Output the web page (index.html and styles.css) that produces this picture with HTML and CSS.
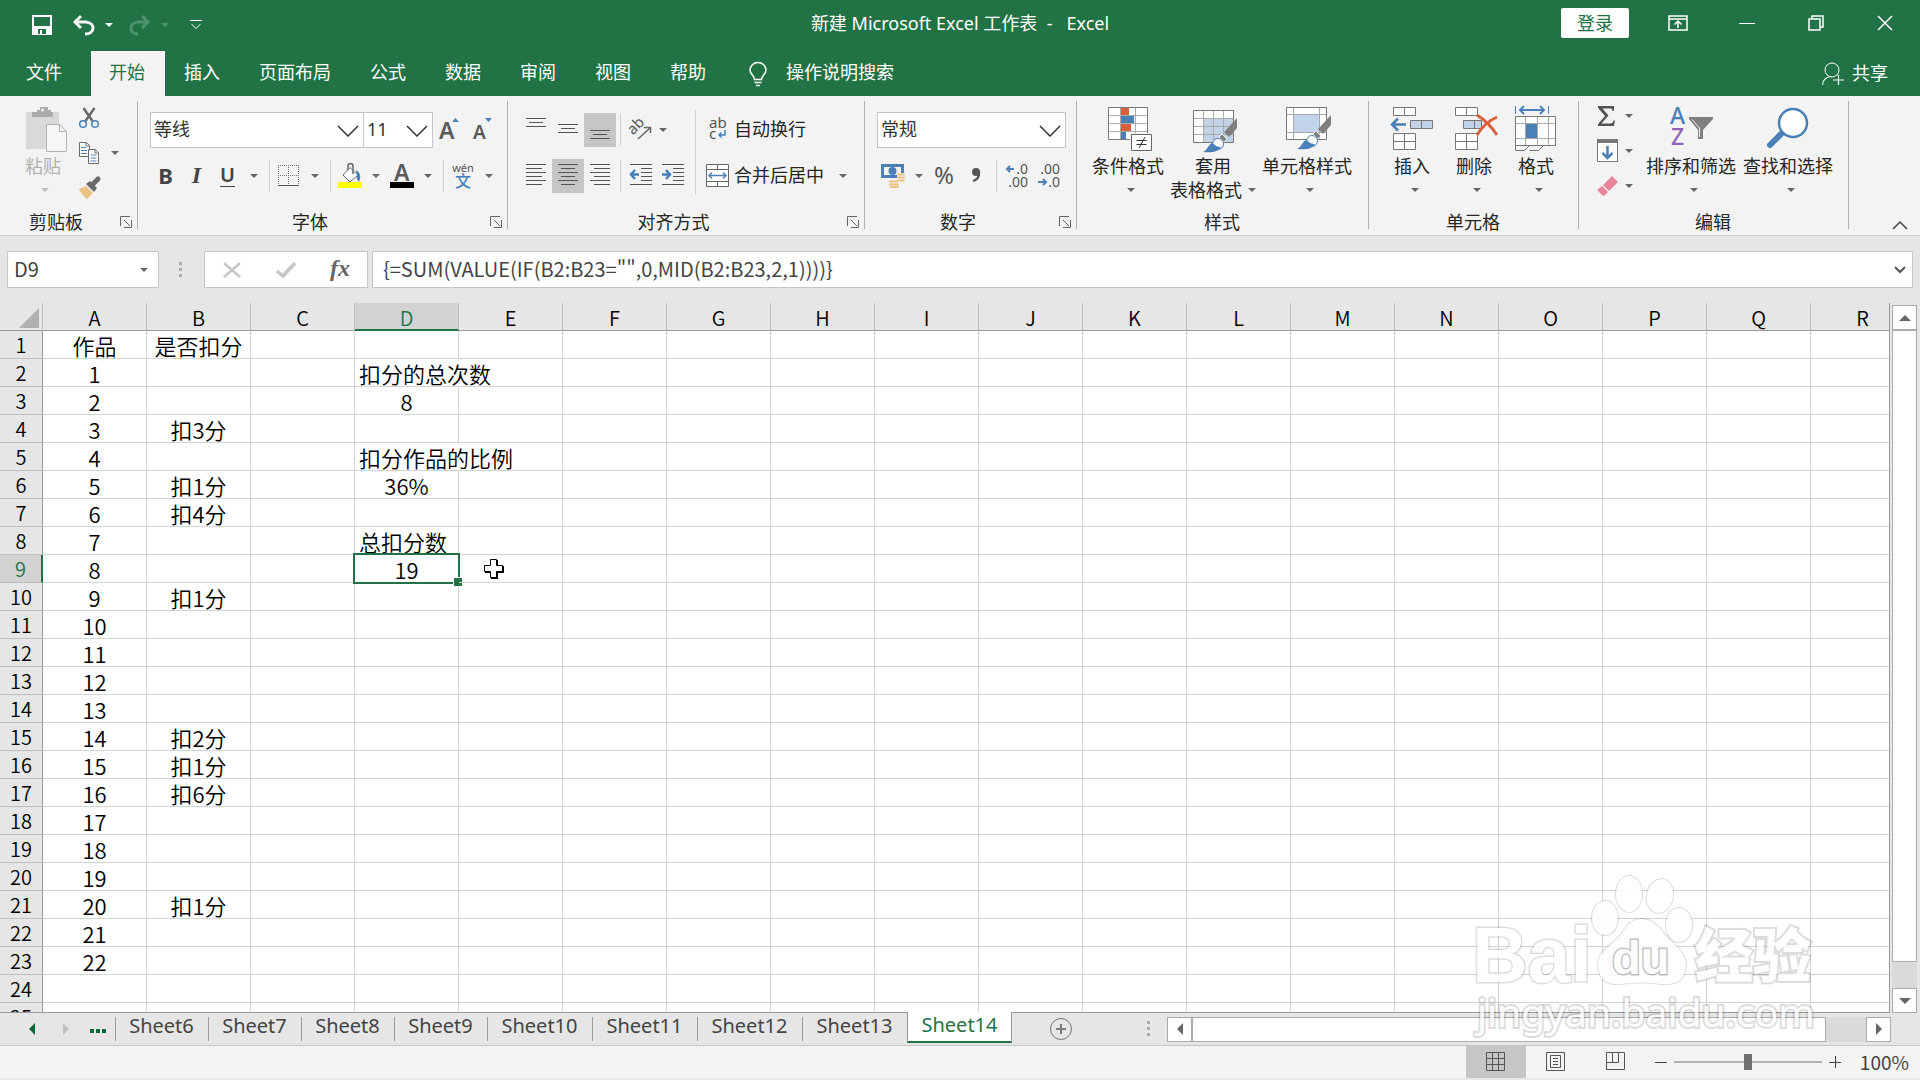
FILE: index.html
```html
<!DOCTYPE html>
<html lang="zh-CN">
<head>
<meta charset="utf-8">
<title>新建 Microsoft Excel 工作表 - Excel</title>
<link rel="stylesheet" href="styles.css">
</head>
<body>
<svg class="defs" aria-hidden="true">
  <symbol id="caret" viewBox="0 0 8 4"><path d="M0 0h8L4 4z" fill="currentColor"/></symbol>
  <symbol id="chevron" viewBox="0 0 22 12"><path d="M1 1l10 10L21 1" fill="none" stroke="#333" stroke-width="1.5"/></symbol>
  <symbol id="launcher" viewBox="0 0 12 12"><path d="M.5 10V.5H10M4 4l6 6M11.500 4v7.500H4" fill="none" stroke="#666"/></symbol>
  <symbol id="brush" viewBox="0 0 48 48">
    <path d="M48 12v10l-8 9-5-5z" fill="#7f7f7f"/>
    <path d="M33 28l5 5-3 3-5-5z" fill="#7f7f7f" stroke="#f3f3f3"/>
    <circle cx="29" cy="38" r="5.500" fill="#fff" stroke="#4a80b8"/>
    <path d="M14 46c5-2 5-8 10-9 2 3 5 4 8 4-3 5-10 6-18 5z" fill="#4a80b8"/>
  </symbol>
</svg>
<div class="app">
  <header class="titlebar">
    <div class="quick">
      <button class="quick-save" aria-label="保存"><svg width="20" height="20"><path d="M1 1h18v18H1z" fill="none" stroke="#fff" stroke-width="2"/><path d="M2 11h16v8H2z" fill="#fff"/><path d="M6 14h8v5H6z" fill="#217346"/><path d="M8 15h2v4H8z" fill="#fff"/></svg></button>
      <button class="quick-undo" aria-label="撤消"><svg width="24" height="20"><path d="M9 1L3 7l6 6M3 7h11c10 1 9 12-1 12" fill="none" stroke="#f3f3f3" stroke-width="3"/></svg></button>
      <button class="quick-drop" aria-label="撤消列表"><svg width="8" height="4"><use href="#caret"/></svg></button>
      <button class="quick-redo" aria-label="恢复"><svg width="24" height="20"><path d="M14 1l6 6-6 6M20 7H10C0 8 1 19 10 19" fill="none" stroke="#4f9270" stroke-width="3"/></svg></button>
      <button class="quick-drop faded" aria-label="恢复列表"><svg width="8" height="4"><use href="#caret"/></svg></button>
      <button class="quick-more" aria-label="自定义快速访问工具栏"><svg width="12" height="10"><path d="M0 .5h12M1.500 4L6 8.500 10.500 4" fill="none" stroke="#fff"/></svg></button>
    </div>
    <h1>新建 Microsoft Excel 工作表&nbsp; -&nbsp;&nbsp; Excel</h1>
    <div class="window">
      <button class="signin">登录</button>
      <button class="win" aria-label="功能区显示选项"><svg width="20" height="16"><path d="M1 1h18v14H1zM1 4h18M10 13V7M6.500 9.500L10 6l3.500 3.500" fill="none" stroke="#fff" stroke-width="1.500"/></svg></button>
      <button class="win" aria-label="最小化"><svg width="16" height="16"><path d="M0 8.500h16" stroke="#fff"/></svg></button>
      <button class="win" aria-label="向下还原"><svg width="16" height="16"><path d="M1 4h11v11H1zM4 4V1h11v11h-3" fill="none" stroke="#fff" stroke-width="1.500"/></svg></button>
      <button class="win" aria-label="关闭"><svg width="16" height="16"><path d="M1 1l14 14M15 1L1 15" stroke="#fff" stroke-width="1.500"/></svg></button>
    </div>
  </header>
  <nav class="tabs">
    <button class="tab file">文件</button>
    <button class="tab active">开始</button>
    <button class="tab">插入</button>
    <button class="tab">页面布局</button>
    <button class="tab">公式</button>
    <button class="tab">数据</button>
    <button class="tab">审阅</button>
    <button class="tab">视图</button>
    <button class="tab">帮助</button>
    <label class="tell">
      <svg width="18" height="24"><path d="M5.500 17.500c0-4-4.500-5-4.500-9.500a8 7.500 0 0116 0c0 4.500-4.500 5.500-4.500 9.500zM5.500 20.500h7M7 23.500h4" fill="none" stroke="#fff" stroke-width="1.500"/></svg>
      <input type="text" placeholder="操作说明搜索" aria-label="操作说明搜索">
    </label>
    <button class="share"><svg width="24" height="24"><circle cx="11" cy="8" r="7" fill="none" stroke="#fff"/><path d="M1.500 23c0-5 4-8.500 9-8.500M17.500 13v10M12 18h11" fill="none" stroke="#fff" stroke-width="1.200"/></svg><span>共享</span></button>
  </nav>

  <section class="ribbon">
    <div class="group clipboard">
      <div class="body big-row">
        <button class="big paste" disabled><svg width="44" height="48"><path d="M3 6h33v37H3z" fill="#d9d9d9"/><path d="M9 6h5V4h3V1h8v3h3v2h2v5H9z" fill="#ababab"/><circle cx="19.500" cy="4" r="1.500" fill="#f3f3f3"/><path d="M23.500 18.500h13l7 7v20h-20z" fill="#f6f6f6" stroke="#b1b1b1"/><path d="M36.500 18.500v7h7" fill="none" stroke="#b1b1b1"/></svg><span>粘贴</span><span class="drop-line"><svg width="8" height="4"><use href="#caret"/></svg></span></button>
        <div class="stack">
          <div><button class="tool" aria-label="剪切"><svg width="20" height="22"><path d="M4.500 1l9 13M15.500 1l-9 13" stroke="#6a6a6a" stroke-width="2.500"/><circle cx="4" cy="17" r="3.300" fill="none" stroke="#4a80b8" stroke-width="1.500"/><circle cx="16" cy="17" r="3.300" fill="none" stroke="#4a80b8" stroke-width="1.500"/></svg></button></div>
          <div><button class="tool" aria-label="复制"><svg width="20" height="22"><g fill="#fff" stroke="#6a6a6a"><path d="M.5.500h7l3 3v11H.5z"/><path d="M9.500 7.500h7l3 3v11h-10z"/><path d="M16 7.500v3.500h3.500M7 .5V4h3.500"/></g><path d="M2 5.500h5M2 8.500h6M2 11.500h6M11.500 13h6M11.500 16h6M11.500 19h6" stroke="#4a80b8"/></svg></button><button class="drop" aria-label="复制选项"><svg width="8" height="4"><use href="#caret"/></svg></button></div>
          <div><button class="tool" aria-label="格式刷"><svg width="24" height="22"><path d="M2 12l7-3 7 7-6 6c-3-3-6-5-8-10z" fill="#eac282"/><path d="M9 7l4-3 7 7-3 4z" fill="#6a6a6a"/><path d="M15 8l6-6" stroke="#6a6a6a" stroke-width="5" stroke-linecap="round"/></svg></button></div>
        </div>
      </div>
      <div class="foot"><span>剪贴板</span><button aria-label="剪贴板设置"><svg width="12" height="12"><use href="#launcher"/></svg></button></div>
    </div>

    <div class="group font">
      <div class="body rows">
        <div class="row">
          <label class="combo face"><select aria-label="字体"><option>等线</option></select><svg width="22" height="12"><use href="#chevron"/></svg></label>
          <label class="combo size"><select aria-label="字号"><option>11</option></select><svg width="22" height="12"><use href="#chevron"/></svg></label>
          <button class="tool grow" aria-label="增大字号"><svg width="22" height="26"><text x="0" y="22" class="glyph" font-size="23">A</text><path d="M13 5l3.500-4L20 5z" fill="#4a80b8"/></svg></button>
          <button class="tool grow" aria-label="减小字号"><svg width="22" height="26"><text x="1" y="22" class="glyph" font-size="19">A</text><path d="M13 1h7l-3.500 4z" fill="#4a80b8"/></svg></button>
        </div>
        <div class="row">
          <button class="tool letter bold">B</button>
          <button class="tool letter italic">I</button>
          <button class="tool letter underline">U</button>
          <button class="drop" aria-label="下划线选项"><svg width="8" height="4"><use href="#caret"/></svg></button>
          <i class="sep"></i>
          <button class="tool" aria-label="边框"><svg width="22" height="22"><path d="M.5 0v20M10.500 0v20M20.500 0v20M0 .5h21M0 10.500h21" stroke="#777" stroke-dasharray="1 1"/><path d="M0 20.500h21" stroke="#555"/></svg></button>
          <button class="drop" aria-label="边框选项"><svg width="8" height="4"><use href="#caret"/></svg></button>
          <i class="sep"></i>
          <button class="tool" aria-label="填充颜色"><svg width="24" height="26"><path d="M12 4.500l8 7.500-8 7-7-7z" fill="#fff" stroke="#6a6a6a"/><path d="M10 7V3a2.500 2.500 0 015 0v8" fill="none" stroke="#6a6a6a" stroke-width="1.500"/><path d="M18 7c5 3 5 8 3 12-1-2-3-3-2-6z" fill="#4a80b8"/><path d="M0 19h24v6H0z" fill="#ff0"/></svg></button>
          <button class="drop" aria-label="填充颜色选项"><svg width="8" height="4"><use href="#caret"/></svg></button>
          <button class="tool" aria-label="字体颜色"><svg width="24" height="26"><text x="4" y="18" class="glyph" font-size="23">A</text><path d="M0 19h24v6H0z"/></svg></button>
          <button class="drop" aria-label="字体颜色选项"><svg width="8" height="4"><use href="#caret"/></svg></button>
          <i class="sep"></i>
          <button class="tool" aria-label="拼音"><svg width="24" height="26"><text x="12" y="9" text-anchor="middle" font-size="11" fill="#555">wén</text><text x="12" y="24" text-anchor="middle" font-size="16" fill="#4a80b8" font-weight="500">文</text></svg></button>
          <button class="drop" aria-label="拼音选项"><svg width="8" height="4"><use href="#caret"/></svg></button>
        </div>
      </div>
      <div class="foot"><span>字体</span><button aria-label="字体设置"><svg width="12" height="12"><use href="#launcher"/></svg></button></div>
    </div>

    <div class="group align">
      <div class="body split">
        <div class="rows">
          <div class="row">
            <button class="tool wide" aria-label="顶端对齐"><svg width="20" height="24"><path d="M0 .5h20M3 4.500h14M0 8.500h20" stroke="#555"/></svg></button>
            <button class="tool wide" aria-label="垂直居中"><svg width="20" height="24"><path d="M0 6.500h20M3 10.500h14M0 14.500h20" stroke="#555"/></svg></button>
            <button class="tool wide on" aria-label="底端对齐"><svg width="20" height="24"><path d="M0 12.500h20M3 16.500h14M0 20.500h20" stroke="#555"/></svg></button>
            <i class="sep"></i>
            <button class="tool wide" aria-label="方向"><svg width="22" height="22"><text x="1" y="14" font-size="15" fill="#555" transform="rotate(-45 5 13)">ab</text><path d="M8 20L20 9M14 8.500h6.500V14" fill="none" stroke="#666" stroke-width="1.500"/></svg></button>
            <button class="drop slim" aria-label="方向选项"><svg width="8" height="4"><use href="#caret"/></svg></button>
          </div>
          <div class="row">
            <button class="tool wide" aria-label="左对齐"><svg width="20" height="24"><path d="M0 .5h20M0 4.500h16M0 8.500h20M0 12.500h16M0 16.500h20M0 20.500h16" stroke="#555"/></svg></button>
            <button class="tool wide on" aria-label="居中"><svg width="20" height="24"><path d="M0 .5h20M3 4.500h14M0 8.500h20M3 12.500h14M0 16.500h20M3 20.500h14" stroke="#555"/></svg></button>
            <button class="tool wide" aria-label="右对齐"><svg width="20" height="24"><path d="M0 .5h20M4 4.500h16M0 8.500h20M4 12.500h16M0 16.500h20M4 20.500h16" stroke="#555"/></svg></button>
            <i class="sep"></i>
            <button class="tool wide" aria-label="减少缩进量"><svg width="24" height="24"><path d="M1 .5h22M12 4.500h11M12 8.500h11M12 12.500h11M12 16.500h11M1 20.500h22" stroke="#555"/><path d="M10 10.500H2M6 6l-4 4.500L6 15" fill="none" stroke="#4a80b8" stroke-width="2.500"/></svg></button>
            <button class="tool wide" aria-label="增加缩进量"><svg width="24" height="24"><path d="M1 .5h22M12 4.500h11M12 8.500h11M12 12.500h11M12 16.500h11M1 20.500h22" stroke="#555"/><path d="M1 10.500h8M5 6l4 4.500L5 15" fill="none" stroke="#4a80b8" stroke-width="2.500"/></svg></button>
          </div>
        </div>
        <div class="rows wrap">
          <div class="row"><button class="text-tool"><svg width="24" height="26"><text x="3" y="11" font-size="15" fill="#555">ab</text><text x="3" y="22" font-size="15" fill="#555">c</text><path d="M19 13v5h-6M15.500 15.500L13 18l2.500 2.500" fill="none" stroke="#4a80b8" stroke-width="1.500"/></svg><span>自动换行</span></button></div>
          <div class="row"><button class="text-tool"><svg width="24" height="26"><path d="M.5 1.500h22v22H.5z" fill="#fff" stroke="#666"/><path d="M1 6.500h21M1 18.500h21M11.500 2v4M11.500 19v4" stroke="#666"/><path d="M3 12.500h17M6 9.500l-3 3 3 3M17 9.500l3 3-3 3" fill="none" stroke="#4a80b8" stroke-width="1.500"/></svg><span>合并后居中</span></button><button class="drop merge" aria-label="合并选项"><svg width="8" height="4"><use href="#caret"/></svg></button></div>
        </div>
      </div>
      <div class="foot"><span>对齐方式</span><button aria-label="对齐设置"><svg width="12" height="12"><use href="#launcher"/></svg></button></div>
    </div>

    <div class="group number">
      <div class="body rows">
        <div class="row"><label class="combo format"><select aria-label="数字格式"><option>常规</option></select><svg width="22" height="12"><use href="#chevron"/></svg></label></div>
        <div class="row">
          <button class="tool wide" aria-label="会计数字格式"><svg width="24" height="24"><path d="M0 0h23v14H0z" fill="#4a80b8"/><path d="M3 3h17v8H3z" fill="#f3f3f3"/><circle cx="11.500" cy="7" r="4" fill="#4a80b8"/><path d="M8 16h8v-7h8v15H8z" fill="#f3f3f3"/><path d="M17 10.500h6M17 13.500h6M17 16.500h6M9 17.500h7M9 20.500h8M10 23h7" stroke="#eac282" stroke-width="2" stroke-linecap="round"/></svg></button>
          <button class="drop coin" aria-label="货币选项"><svg width="8" height="4"><use href="#caret"/></svg></button>
          <button class="tool wide letter percent">%</button>
          <button class="tool wide" aria-label="千位分隔样式"><svg width="12" height="22"><circle cx="6" cy="7" r="4" fill="#555"/><path d="M10 6c1 6-2 10-7 11v-2c4-2 5-4 4-7z" fill="#555"/></svg></button>
          <i class="sep"></i>
          <button class="tool wide" aria-label="增加小数位数"><svg width="24" height="26"><text x="23" y="11" text-anchor="end" font-size="14" fill="#555">.0</text><text x="23" y="24" text-anchor="end" font-size="14" fill="#555">.00</text><path d="M9 6H2M5 3L2 6l3 3" fill="none" stroke="#4a80b8" stroke-width="2"/></svg></button>
          <button class="tool wide" aria-label="减少小数位数"><svg width="24" height="26"><text x="23" y="11" text-anchor="end" font-size="14" fill="#555">.00</text><text x="23" y="24" text-anchor="end" font-size="14" fill="#555">.0</text><path d="M1 19h8M6 16l3 3-3 3" fill="none" stroke="#4a80b8" stroke-width="2"/></svg></button>
        </div>
      </div>
      <div class="foot"><span>数字</span><button aria-label="数字设置"><svg width="12" height="12"><use href="#launcher"/></svg></button></div>
    </div>

    <div class="group styles">
      <div class="body big-row">
        <button class="big"><svg width="48" height="48"><path d="M4.500 1.500h39v32h-39z" fill="#fff"/><path d="M16.500 1v33M31.500 1v33M4 9.500h40M4 17.500h40M4 25.500h40" stroke="#aaa"/><path d="M4.500 1.500h39v32h-39z" fill="none" stroke="#777"/><path d="M17 2h8v7h-8zM17 18h10v7H17z" fill="#d9603b"/><path d="M17 10h13v7H17zM17 26h5v7h-5z" fill="#4a80b8"/><path d="M26 27h22v19H26z" fill="#f3f3f3"/><path d="M27.500 28.500h20v16h-20z" fill="#fff" stroke="#666"/><path d="M32.500 34.500h10M32.500 38.500h10M41 31l-6 11" stroke="#333"/></svg><span>条件格式</span><span class="drop-line"><svg width="8" height="4"><use href="#caret"/></svg></span></button>
        <button class="big"><svg width="48" height="48"><path d="M4.500 4.500h40v32h-40z" fill="#fff"/><path d="M14.500 12.500h30v24h-30z" fill="#c0d3e9"/><path d="M14.500 4v33M24.500 4v33M34.500 4v33M4 12.500h41M4 20.500h41M4 28.500h41" stroke="#aaa"/><path d="M4.500 4.500h40v32h-40z" fill="none" stroke="#777"/><use href="#brush"/></svg><span>套用</span><span class="drop-line inline">表格格式<svg width="8" height="4"><use href="#caret"/></svg></span></button>
        <button class="big"><svg width="48" height="48"><path d="M3.500 1.500h40v32h-40z" fill="#fff"/><path d="M10.500 8.500h26v18h-26z" fill="#c0d3e9"/><path d="M10.500 1v33M36.500 1v33M3 8.500h41M3 26.500h41" stroke="#aaa"/><path d="M3.500 1.500h40v32h-40z" fill="none" stroke="#777"/><use href="#brush" y="-3"/></svg><span>单元格样式</span><span class="drop-line"><svg width="8" height="4"><use href="#caret"/></svg></span></button>
      </div>
      <div class="foot"><span>样式</span></div>
    </div>

    <div class="group cells">
      <div class="body big-row">
        <button class="big"><svg width="44" height="48"><g fill="#fff" stroke="#777"><path d="M3.500 1.500h22v8h-22zM14.500 1.500v8M3.500 27.500h22v16h-22zM14.500 27.500v16M3.500 35.500h22"/><path d="M20.500 14.500h22v8h-22zM31.500 14.500v8" fill="#c0d3e9"/></g><path d="M16 18.500H2M8 12.500l-6 6 6 6" fill="none" stroke="#4a80b8" stroke-width="2.500"/></svg><span>插入</span><span class="drop-line"><svg width="8" height="4"><use href="#caret"/></svg></span></button>
        <button class="big"><svg width="48" height="48"><g fill="#fff" stroke="#777"><path d="M5.500 1.500h22v8h-22zM16.500 1.500v8M5.500 27.500h22v16h-22zM16.500 27.500v16M5.500 35.500h22"/><path d="M13.500 14.500h18v8h-18zM24.500 14.500v8" fill="#c0d3e9"/></g><path d="M27 9c8 5 14 11 20 20M47 11c-9 4-16 11-20 18" fill="none" stroke="#d9603b" stroke-width="3"/></svg><span>删除</span><span class="drop-line"><svg width="8" height="4"><use href="#caret"/></svg></span></button>
        <button class="big"><svg width="44" height="48"><path d="M1.500 10.500h40v29h-40z" fill="#fff"/><path d="M11.500 10v29M23.500 10v29M34.500 10v29M1 17.500h40M1 32.500h40" stroke="#aaa"/><path d="M1.500 10.500h40v29h-40zM1.500 39.500v5h9l5-5M15.500 44.500h9l5-5" fill="none" stroke="#777"/><path d="M12 18h11v14H12z" fill="#4a80b8"/><path d="M1.500 0v8M34.500 0v8" stroke="#4a80b8"/><path d="M6 4h24M10 0L6 4l4 4M26 0l4 4-4 4" fill="none" stroke="#4a80b8" stroke-width="2"/></svg><span>格式</span><span class="drop-line"><svg width="8" height="4"><use href="#caret"/></svg></span></button>
      </div>
      <div class="foot"><span>单元格</span></div>
    </div>

    <div class="group edit">
      <div class="body big-row">
        <div class="stack">
          <div><button class="tool" aria-label="自动求和"><svg width="20" height="22"><path d="M2 1h16v5h-1.500c0-2-1-2.500-3-2.500H6.500l6 7-7 8H14c2 0 3-1 3.500-3H19l-1 5.500H2v-2l7-8-7-8z" fill="#555"/></svg></button><button class="drop" aria-label="求和选项"><svg width="8" height="4"><use href="#caret"/></svg></button></div>
          <div><button class="tool" aria-label="填充"><svg width="22" height="24"><path d="M.5.500h20v22H.5z" fill="#fff" stroke="#777"/><path d="M0 0h21v4H0z" fill="#777"/><path d="M10.500 7v12M5.500 14l5 5 5-5" fill="none" stroke="#4a80b8" stroke-width="2.500"/></svg></button><button class="drop slim" aria-label="填充选项"><svg width="8" height="4"><use href="#caret"/></svg></button></div>
          <div><button class="tool" aria-label="清除"><svg width="22" height="22"><path d="M15 1l6 6-9 9-6-6zM5 11l6 6-3 3c-1 1-2 1-3 0l-4-4c-1-1 0-2 0-2z" fill="#e8859b"/></svg></button><button class="drop slim" aria-label="清除选项"><svg width="8" height="4"><use href="#caret"/></svg></button></div>
        </div>
        <button class="big"><svg width="48" height="48"><text x="3" y="18" font-size="23" fill="#4a80b8" font-weight="500">A</text><text x="4" y="39" font-size="23" fill="#9264b8" font-weight="500">Z</text><path d="M22 11h24v2L36 24v9h-5v-9L22 13z" fill="#7f7f7f"/><path d="M25 13.500l7.500 8.500v9" fill="none" stroke="#f3f3f3"/></svg><span>排序和筛选</span><span class="drop-line"><svg width="8" height="4"><use href="#caret"/></svg></span></button>
        <button class="big"><svg width="48" height="48"><path d="M18 27L6 39" stroke="#4a80b8" stroke-width="6" stroke-linecap="round"/><circle cx="29" cy="17" r="14" fill="#fff" stroke="#4a80b8" stroke-width="2.500"/></svg><span>查找和选择</span><span class="drop-line"><svg width="8" height="4"><use href="#caret"/></svg></span></button>
      </div>
      <div class="foot"><span>编辑</span></div>
    </div>
    <button class="collapse" aria-label="折叠功能区"><svg width="16" height="10"><path d="M1 9l7-7 7 7" fill="none" stroke="#444" stroke-width="1.500"/></svg></button>
  </section>

  <section class="formula-bar">
    <label class="namebox"><input type="text" value="D9" aria-label="名称框"><svg width="8" height="4"><use href="#caret"/></svg></label>
    <svg class="grip" width="3" height="16"><path d="M0 0h3v3H0zM0 6h3v3H0zM0 12h3v3H0z" fill="#aaa"/></svg>
    <div class="fx">
      <button aria-label="取消"><svg width="18" height="16"><path d="M1 1l16 14M17 1L1 15" stroke="#c6c6c6" stroke-width="2.500"/></svg></button>
      <button aria-label="输入"><svg width="20" height="16"><path d="M1 9l6 5L19 1" fill="none" stroke="#c6c6c6" stroke-width="3.500"/></svg></button>
      <button class="fn" aria-label="插入函数">fx</button>
    </div>
    <label class="formula"><input type="text" value='{=SUM(VALUE(IF(B2:B23="",0,MID(B2:B23,2,1))))}' aria-label="编辑栏"><svg width="12" height="7"><path d="M1 1l5 5 5-5" fill="none" stroke="#555" stroke-width="2"/></svg></label>
  </section>

  <main class="workspace">
    <div class="sheet">
      <table id="grid"></table>
    </div>
    <div class="vscroll">
      <button aria-label="向上滚动"><svg width="12" height="6"><path d="M0 6h12L6 0z" fill="#666"/></svg></button>
      <div class="vtrack"><div class="vthumb"></div></div>
      <button aria-label="向下滚动"><svg width="12" height="6"><path d="M0 0h12L6 6z" fill="#666"/></svg></button>
    </div>
  </main>

  <div class="sheetbar">
    <div class="sheet-nav">
      <button aria-label="上一个工作表"><svg width="6" height="12"><path d="M6 0v12L0 6z" fill="#0b6a37"/></svg></button>
      <button aria-label="下一个工作表"><svg width="6" height="12"><path d="M0 0v12l6-6z" fill="#c0c0c0"/></svg></button>
      <button class="more" aria-label="更多工作表"><svg width="16" height="4"><path d="M0 0h4v4H0zM6 0h4v4H6zM12 0h4v4h-4z" fill="#0b6a37"/></svg></button>
    </div>
    <div class="sheet-tabs">
      <button>Sheet6</button><button>Sheet7</button><button>Sheet8</button><button>Sheet9</button><button class="long">Sheet10</button><button class="long">Sheet11</button><button class="long">Sheet12</button><button class="long">Sheet13</button><button class="long current">Sheet14</button>
    </div>
    <button class="add" aria-label="新工作表"><svg width="24" height="24"><circle cx="12" cy="12" r="10.500" fill="none" stroke="#777"/><path d="M12 7v10M7 12h10" stroke="#777" stroke-width="2"/></svg></button>
    <svg class="grip" width="3" height="16"><path d="M0 0h3v3H0zM0 6h3v3H0zM0 12h3v3H0z" fill="#aaa"/></svg>
    <div class="hscroll">
      <button aria-label="向左滚动"><svg width="6" height="12"><path d="M6 0v12L0 6z" fill="#666"/></svg></button>
      <div class="htrack"><div class="hthumb"></div></div>
      <button aria-label="向右滚动"><svg width="6" height="12"><path d="M0 0v12l6-6z" fill="#666"/></svg></button>
    </div>
  </div>

  <footer class="status">
    <button class="view on" aria-label="普通"><svg width="20" height="20"><path d="M.5.500h18v18H.5zM6.500.500v18M12.500.500v18M.5 6.500h18M.5 12.500h18" fill="none" stroke="#555"/></svg></button>
    <button class="view" aria-label="页面布局"><svg width="20" height="20"><path d="M.5.500h18v18H.5zM4.500 3.500h10v12h-10zM7 6.500h5M7 9.500h5M7 12.500h5" fill="none" stroke="#555"/></svg></button>
    <button class="view" aria-label="分页预览"><svg width="20" height="20"><path d="M.5.500h18v17H.5zM6.500.500v10M12.500.500v10M.5 10.500h12" fill="none" stroke="#555"/></svg></button>
    <button class="step" aria-label="缩小"><svg width="12" height="12"><path d="M0 6.500h12" stroke="#444"/></svg></button>
    <input class="zoom" type="range" min="0" max="100" value="50" aria-label="显示比例">
    <button class="step" aria-label="放大"><svg width="12" height="12"><path d="M0 6.500h12M6.500 0v12" stroke="#444"/></svg></button>
    <span class="percent-label">100%</span>
  </footer>

  <svg class="watermark" width="360" height="180" aria-hidden="true">
    <g class="mark">
      <text x="2" y="112" class="latin" font-size="77">Bai</text>
      <ellipse cx="135" cy="48" rx="13" ry="17"/>
      <ellipse cx="159" cy="24" rx="13" ry="18"/>
      <ellipse cx="190" cy="26" rx="13" ry="17" transform="rotate(12 190 26)"/>
      <ellipse cx="209" cy="55" rx="13" ry="17"/>
      <path d="M171 49c-9 0-14 6-19 14-7 11-24 17-24 32 0 16 11 20 22 19 14-2 28-2 42 0 12 1 24-3 24-19 0-13-11-19-19-28-6-7-12-18-26-18z"/>
      <text x="142" y="104" class="latin thin" font-size="47">du</text>
      <text x="225" y="107" class="han" font-size="58">经验</text>
      <text x="7" y="157" class="url" font-size="39">jingyan.baidu.com</text>
    </g>
  </svg>
</div>
<script src="grid.js"></script>
</body>
</html>
```
FILE: styles.css
```css
* { box-sizing: border-box; }

body {
  margin: 0;
  font: 18px/24px "Noto Sans", "Noto Sans CJK SC", sans-serif;
  color: #262626;
  background: #e6e6e6;
}

button, input, select {
  font: inherit;
  color: inherit;
  margin: 0;
  padding: 0;
  border: 0;
  border-radius: 0;
  background: none;
  outline: none;
}

button {
  display: flex;
  align-items: center;
  justify-content: center;
  white-space: nowrap;
}

svg { display: block; flex: none; overflow: visible; }

.defs { position: absolute; width: 0; height: 0; }

.app {
  display: flex;
  flex-direction: column;
  height: 100vh;
  overflow: hidden;
  position: relative;
}

/* Title bar */
.titlebar {
  flex: none;
  display: grid;
  grid-template-columns: 1fr auto 1fr;
  align-items: center;
  height: 51px;
  background: #217346;
  color: #fff;
}
.titlebar h1 { margin: 0; padding-bottom: 5px; font-size: 18px; font-weight: 400; }
.quick { display: flex; align-items: center; padding: 0 0 2px 32px; }
.quick-undo { margin-left: 20px; }
.quick-drop { width: 26px; }
.quick-drop.faded { color: #4f9270; }
.quick-redo { margin-left: 6px; }
.quick-more { margin-left: 12px; }
.window { display: flex; align-items: center; justify-content: flex-end; padding: 0 1px 5px 0; }
.signin {
  width: 68px;
  height: 30px;
  margin-right: 14px;
  border-radius: 2px;
  background: #fff;
  color: #217346;
}
.win { width: 69px; height: 30px; }

/* Ribbon tabs */
.tabs {
  flex: none;
  display: flex;
  gap: 1px;
  height: 45px;
  background: #217346;
  color: #fff;
}
.tab { padding: 0 20px 3px 18px; }
.tab.file { width: 90px; }
.tab.active { background: #f3f3f3; color: #217346; }
.tell { display: flex; align-items: center; gap: 19px; flex: 1; margin-left: 22px; }
.tell input { width: 200px; padding-bottom: 3px; }
.tell input::placeholder { color: #fff; opacity: 1; }
.share { gap: 7px; margin-right: 32px; }
.share span { padding-bottom: 2px; }

/* Ribbon */
.ribbon {
  flex: none;
  display: flex;
  height: 140px;
  background: #f3f3f3;
  border-bottom: 1px solid #cfcfcf;
  color: #262626;
}
.group {
  flex: none;
  display: flex;
  flex-direction: column;
  background: linear-gradient(#b1b1b1, #b1b1b1) right 5px / 1px 128px no-repeat;
}
.clipboard { width: 138px; }
.font { width: 370px; }
.align { width: 357px; }
.number { width: 212px; }
.styles { width: 292px; }
.cells { width: 210px; }
.edit { width: 270px; }

.body { height: 113px; }
.foot { display: flex; align-items: center; height: 25px; padding-right: 6px; }
.foot span { flex: 1; padding-right: 8px; text-align: center; }
.styles .foot, .cells .foot, .edit .foot { padding: 0; }
.styles .foot span, .cells .foot span, .edit .foot span { padding-right: 2px; }

.rows { padding-top: 16px; }
.row { display: flex; align-items: center; height: 36px; }
.row + .row { margin-top: 10px; }
.split { display: flex; }
.split .rows { height: 113px; }
.font .body, .align .body, .number .body { padding-left: 12px; }

.tool { width: 30px; height: 34px; }
.tool.wide { width: 32px; }
.tool.on { background: #c6c6c6; }
.tool.grow { width: 33px; }
.drop { width: 22px; height: 34px; color: #666; }
.drop.slim { width: 12px; }
.drop.coin { width: 19px; }
.drop.merge { margin-left: 8px; }
.sep { flex: none; width: 1px; height: 32px; margin: 0 4px; background: #d0d0d0; }

.letter { padding-bottom: 3px; font-size: 22px; color: #444; }
.font .letter { width: 31px; }
.bold { font-weight: 700; }
.italic { font-family: "Liberation Serif", serif; font-style: italic; font-weight: 700; font-size: 24px; }
.underline { font-weight: 600; font-size: 20px; text-decoration: underline; text-underline-offset: 4px; text-decoration-thickness: 1px; }
.percent { font-size: 24px; color: #555; }
.glyph { font-weight: 600; fill: #5a5a5a; }

.wrap { padding-left: 11px; background: linear-gradient(#d0d0d0, #d0d0d0) left 14px / 1px 85px no-repeat; }
.align .split > .rows:first-child { width: 169px; }
.align .wrap { margin-left: 6px; }
.text-tool { gap: 4px; height: 34px; }
.text-tool span { padding-bottom: 2px; }

.combo { position: relative; display: flex; height: 36px; background: #fff; border: 1px solid #c6c6c6; }
.combo select { width: 100%; padding: 0 3px 2px; appearance: none; color: #333; }
.combo svg { position: absolute; right: 4px; top: 12px; pointer-events: none; }
.face { width: 214px; }
.size { width: 70px; margin-left: -1px; }
.format { width: 189px; }

.big-row { display: flex; padding-top: 10px; }
.big { display: flex; flex-direction: column; justify-content: flex-start; color: #262626; }
.drop-line { display: flex; align-items: center; justify-content: center; height: 24px; color: #666; padding-left: 6px; }
.drop-line.inline { gap: 6px; padding: 0; color: #262626; }
.drop-line.inline svg { color: #666; }
.paste { margin-left: 23px; width: 44px; color: #b1b1b1; }
.paste .drop-line { color: #c0c0c0; padding: 0; }
.paste > span:first-of-type { padding-right: 4px; }
.stack { display: flex; flex-direction: column; margin-top: -6px; }
.stack > div { display: flex; align-items: center; height: 35px; }
.clipboard .stack { margin-left: 7px; }
.styles .big-row { padding-left: 15px; gap: 6px; }
.cells .big-row { padding-left: 12px; }
.cells .big { width: 62px; }
.edit .big-row { padding-left: 14px; gap: 7px; }
.edit .stack { width: 46px; margin-top: -8px; }
.edit .big { width: 90px; }
.collapse { width: 28px; height: 20px; margin: 119px 6px 0 auto; }

/* Formula bar */
.formula-bar { flex: none; display: flex; align-items: center; padding: 15px 7px; height: 67px; color: #444; }
.namebox, .formula, .fx { display: flex; align-items: center; height: 37px; background: #fff; border: 1px solid #c6c6c6; }
.namebox { width: 152px; padding: 0 10px 0 6px; color: #666; }
.namebox input, .formula input { padding-bottom: 2px; font-family: "Noto Sans CJK SC", sans-serif; font-size: 20px; }
.namebox input { width: 100%; color: #444; }
.formula-bar .grip { margin: 0 22px 0 20px; }
.fx { width: 164px; margin-right: 4px; }
.fx button { flex: 1; height: 100%; }
.fx .fn { padding-bottom: 3px; font: italic 700 24px/24px "Liberation Serif", serif; color: #666; }
.formula { flex: 1; padding: 0 6px 0 10px; }
.formula input { flex: 1; }

/* Worksheet */
.workspace { flex: 1; display: flex; min-height: 0; }
.sheet { flex: 1; min-width: 0; overflow: hidden; background: #fff; border-right: 1px solid #999; border-bottom: 1px solid #999; }
.sheet table {
  table-layout: fixed;
  border-collapse: separate;
  border-spacing: 0;
  width: 1915px;
  font: 350 22px/24px "Noto Sans CJK SC", sans-serif;
  color: #000;
}
.sheet .head-col { width: 43px; }
.sheet th, .sheet td {
  height: 28px;
  padding: 0;
  border: 0 solid #d4d4d4;
  border-width: 0 1px 1px 0;
  text-align: center;
  white-space: nowrap;
}
.sheet th { font-size: 20px; line-height: 22px; font-weight: 350; color: #000; background: #e6e6e6; border-color: #bfbfbf; }
.sheet thead th { border-bottom-color: #999; padding-top: 3px; }
.sheet tbody th { border-right-color: #999; padding-top: 1px; }
.sheet th.hot { background: #d2d2d2; color: #217346; }
.sheet thead th.hot { border-bottom: 2px solid #217346; }
.sheet tbody th.hot { border-right: 2px solid #217346; }
.sheet td.left { text-align: left; padding-left: 4px; }
.corner svg { margin-left: auto; margin-right: 3px; }
.sheet td.selected, .sheet td.pointer { position: relative; }
.selected::before { content: ""; position: absolute; inset: -2px; border: 2px solid #217346; }
.selected::after { content: ""; position: absolute; right: -4px; bottom: -4px; width: 8px; height: 8px; background: #217346; border: solid #fff; border-width: 1px 0 0 1px; }
.pointer svg { position: absolute; left: 24px; top: 3px; }

.vscroll { flex: none; display: flex; flex-direction: column; width: 30px; padding: 2px 3px 0 2px; }
.vscroll button, .hscroll button, .vthumb, .hthumb { background: #fff; border: 1px solid #ababab; }
.vscroll button { width: 25px; height: 25px; }
.vtrack { flex: 1; background: #dadada; }
.vthumb { height: 96%; }

/* Sheet tabs */
.sheetbar { flex: none; display: flex; align-items: center; height: 33px; border-bottom: 1px solid #c6c6c6; }
.sheet-nav { display: flex; width: 115px; padding-left: 15px; }
.sheet-nav button { width: 34px; height: 28px; }
.sheet-nav .more { width: 30px; padding-top: 4px; }
.sheet-tabs { display: flex; align-self: flex-start; color: #444; font-size: 20px; }
.sheet-tabs button { width: 93px; height: 29px; padding-bottom: 4px; background: linear-gradient(#999, #999) left 4px / 1px 24px no-repeat; }
.sheet-tabs .long { width: 105px; }
.sheet-tabs .current { margin-top: -1px; height: 31px; background: #fff; color: #217346; border: 1px solid #999; border-width: 0 1px 2px; border-bottom-color: #217346; }
.add { margin: 0 74px 0 37px; }
.hscroll { display: flex; flex: 1; margin: 0 29px 0 17px; }
.hscroll button { width: 25px; height: 25px; }
.htrack { flex: 1; background: #dadada; }
.hthumb { width: 94%; height: 25px; }

/* Status bar */
.status { flex: none; display: flex; align-items: center; justify-content: flex-end; height: 34px; background: #f3f3f3; border-bottom: 2px solid #e9e9e9; padding-right: 11px; }
.view { width: 60px; height: 32px; }
.view.on { background: #c6c6c6; }
.step { width: 26px; height: 30px; }
.zoom { appearance: none; width: 148px; height: 16px; background: linear-gradient(#b1b1b1, #b1b1b1) center / 100% 2px no-repeat; }
.zoom::-webkit-slider-thumb { appearance: none; width: 8px; height: 16px; background: #6f6f6f; }
.percent-label { width: 61px; text-align: right; color: #444; font-size: 19px; font-family: "Noto Sans CJK SC", sans-serif; }
.status .view + .step { margin-left: 2px; }

/* Site mark over the sheet's lower right corner */
.watermark { position: absolute; right: 90px; bottom: 30px; pointer-events: none; }
.mark { fill: #fff; stroke: rgba(0, 0, 0, .16); stroke-width: 2px; paint-order: stroke; opacity: .85; }
.mark .latin { font-family: "Liberation Sans", sans-serif; font-weight: 700; stroke-width: 3px; }
.mark .thin { stroke: rgba(0, 0, 0, .3); }
.mark .han { font-family: "Noto Sans CJK SC", sans-serif; font-weight: 900; stroke-width: 4px; }
.mark .url { font-family: "Noto Sans", sans-serif; stroke-width: 4px; }
```
FILE: grid.js
```js
// Worksheet contents, keyed by row; column A holds the work number.
const deductions = { 4: '扣3分', 6: '扣1分', 7: '扣4分', 10: '扣1分', 15: '扣2分', 16: '扣1分', 17: '扣6分', 21: '扣1分' };
const summary = {
  2: { text: '扣分的总次数', left: true, span: 2 },
  3: { text: '8' },
  5: { text: '扣分作品的比例', left: true, span: 2 },
  6: { text: '36%' },
  8: { text: '总扣分数', left: true },
  9: { text: '19', selected: true }
};
const columns = 'ABCDEFGHIJKLMNOPQR'.split('');
const pointer = '<svg width="22" height="22"><path d="M8 2h7v6h6v7h-6v6H8v-6H2V8h6z" fill="#000"/><path d="M7.500 1.500h6v6h6v6h-6v6h-6v-6h-6v-6h6z" fill="#fff" stroke="#000"/></svg>';

let html = '<thead><tr><th class="head-col corner"><svg width="20" height="20"><path d="M20 0v20H0z" fill="#b1b1b1"/></svg></th>';
html += columns.map(c => `<th${c === 'D' ? ' class="hot"' : ''}>${c}</th>`).join('') + '</tr></thead><tbody>';

for (let r = 1; r <= 25; r++) {
  html += `<tr><th${r === 9 ? ' class="hot"' : ''}>${r}</th>`;
  for (let i = 0; i < columns.length; i++) {
    const c = columns[i];
    if (c === 'A') html += `<td>${r === 1 ? '作品' : r <= 23 ? r - 1 : ''}</td>`;
    else if (c === 'B') html += `<td>${r === 1 ? '是否扣分' : deductions[r] || ''}</td>`;
    else if (c === 'D' && summary[r]) {
      const s = summary[r];
      const cls = s.left ? 'left' : s.selected ? 'selected' : '';
      html += `<td class="${cls}" colspan="${s.span || 1}">${s.text}</td>`;
      if (s.span) i++;
    } else if (c === 'E' && r === 9) html += `<td class="pointer">${pointer}</td>`;
    else html += '<td></td>';
  }
  html += '</tr>';
}
document.getElementById('grid').innerHTML = html + '</tbody>';
```
